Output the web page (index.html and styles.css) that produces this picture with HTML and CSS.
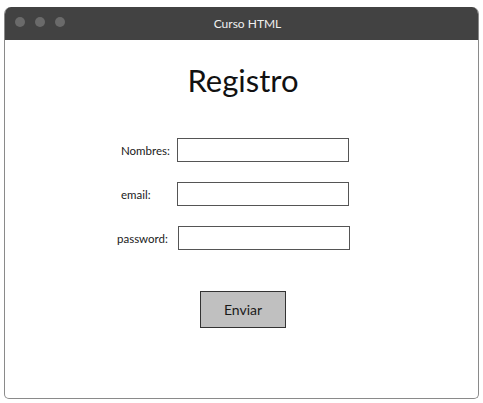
FILE: index.html
```html
<!DOCTYPE html>
<html lang="es">
<head>
<meta charset="utf-8">
<title>Curso HTML</title>
<link rel="stylesheet" href="styles.css">
</head>
<body>
<div class="page">
  <div class="window">
    <div class="titlebar">
      <div class="dots"><span class="dot"></span><span class="dot"></span><span class="dot"></span></div>
      <div class="title">Curso HTML</div>
    </div>
    <div class="content">
      <h1 class="heading">Registro</h1>
      <form class="form">
        <div class="row">
          <label class="label label-nombres">Nombres:</label>
          <span class="field"></span>
        </div>
        <div class="row">
          <label class="label label-email">email:</label>
          <span class="field"></span>
        </div>
        <div class="row">
          <label class="label label-password">password:</label>
          <span class="field field-shift"></span>
        </div>
        <div class="actions">
          <button type="button" class="button">Enviar</button>
        </div>
      </form>
    </div>
  </div>
</div>
</body>
</html>
```
FILE: styles.css
```css
* { box-sizing: border-box; }
html, body { margin: 0; padding: 0; background: #ffffff; }
body { font-family: "Lato", "Liberation Sans", sans-serif; color: #1a1a1a; }
.page { padding: 7px 4px 4px 4px; }
.window {
  width: 475px;
  height: 392px;
  border: 1.5px solid #8a8a8a;
  border-top: none;
  border-radius: 7px 7px 5px 5px;
  overflow: hidden;
  display: flex;
  flex-direction: column;
}
.titlebar {
  height: 33px;
  background: #424242;
  position: relative;
  display: flex;
  align-items: center;
  justify-content: center;
  flex-shrink: 0;
}
.dots {
  position: absolute;
  left: 10px;
  top: 10px;
  display: flex;
  gap: 10px;
}
.dot { width: 10px; height: 10px; border-radius: 50%; background: #6a6a6a; }
.title { color: #f0f0f0; font-size: 12px; padding-left: 12px; }
.content { flex: 1; display: flex; flex-direction: column; align-items: center; }
.heading {
  margin: 20px 0 0 0;
  font-weight: 400;
  font-size: 31px;
  line-height: 40px;
  color: #111;
  padding-left: 3px;
}
.form { margin-top: 38px; display: flex; flex-direction: column; align-self: flex-start; margin-left: 112px; }
.row { display: flex; align-items: center; height: 24px; margin-bottom: 20px; }
.label { width: 60px; font-size: 11.5px; color: #1a1a1a; }
.label-nombres, .label-email { padding-left: 4px; }
.field {
  width: 172px;
  height: 24px;
  border: 1.5px solid #555;
  background: #fff;
}
.field-shift { margin-left: 1px; }
.actions { display: flex; margin-top: 21px; padding-left: 83px; }
.button {
  width: 86px;
  height: 37px;
  background: #c0c0c0;
  border: 1.5px solid #333;
  border-radius: 0;
  font-family: "Lato", "Liberation Sans", sans-serif;
  font-size: 14px;
  color: #1a1a1a;
  padding: 0;
}
```
